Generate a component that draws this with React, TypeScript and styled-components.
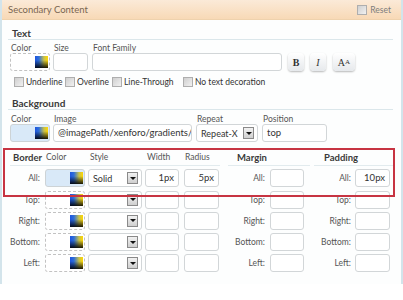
import React from 'react'
import styled, { createGlobalStyle } from 'styled-components'

const GlobalStyle = createGlobalStyle`
    body {
        margin: 0;
        background: #fff;
        font-family: Lato, "Liberation Sans", sans-serif;
        color: #333;
    }
`

const Panel = styled.div`
    width: 403px;
    box-sizing: border-box;
    border-left: 2px solid #d3e4eb;
    border-right: 2px solid #d3e4eb;
    background: #fdfefe;
    padding-bottom: 12px;
`

const Header = styled.div`
    height: 20px;
    box-sizing: border-box;
    display: flex;
    align-items: center;
    justify-content: space-between;
    padding: 0 6px 0 6px;
    background: linear-gradient(#fbead8, #f8d9b6);
    border-bottom: 1px solid #efd2ad;
`

const HeaderTitle = styled.span`
    font-size: 9.5px;
    color: #7a6651;
`

const ResetLabel = styled.label`
    display: flex;
    align-items: center;
    gap: 3px;
    font-size: 8.5px;
    color: #7d7d7d;
    margin-right: 4px;
`

const Body = styled.div`
    padding: 0 8px 0 6px;
`

const SectionHeading = styled.div<{ $top: number }>`
    margin-top: ${p => p.$top}px;
    padding: 0 4px;
    height: 12px;
    line-height: 12px;
    font-size: 10px;
    font-weight: 700;
    color: #3a3a3a;
    border-bottom: 1px solid #dbe7eb;
`

const FieldRow = styled.div<{ $top: number }>`
    display: flex;
    align-items: flex-end;
    margin-top: ${p => p.$top}px;
    padding-left: 2px;
`

const Field = styled.div<{ $w: number; $ml?: number }>`
    display: flex;
    flex-direction: column;
    width: ${p => p.$w}px;
    margin-left: ${p => p.$ml || 0}px;
`

const FieldLabel = styled.div`
    height: 10px;
    line-height: 10px;
    font-size: 8.5px;
    color: #555;
    padding-left: 1px;
`

const TextBox = styled.div<{ $align?: string }>`
    height: 18px;
    box-sizing: border-box;
    border: 1px solid #d2d6d8;
    border-radius: 3px;
    background: #fff;
    font-size: 9.5px;
    line-height: 16px;
    color: #333;
    padding: 0 4px;
    text-align: ${p => p.$align || 'left'};
    white-space: nowrap;
    overflow: hidden;
`

const ColorBox = styled.div<{ $filled?: boolean }>`
    height: 18px;
    box-sizing: border-box;
    border: 1px ${p => (p.$filled ? 'solid #cdd3d6' : 'dashed #c2c2c2')};
    border-radius: 3px;
    background: ${p => (p.$filled ? '#d9e9f8' : '#fff')};
    display: flex;
    align-items: center;
    justify-content: flex-end;
    padding-right: 1px;
`

const Swatch = styled.span`
    width: 13px;
    height: 12px;
    background:
        linear-gradient(to bottom, rgba(0, 0, 0, 0) 35%, rgba(0, 0, 0, 0.9) 100%),
        linear-gradient(to right, #1d55e0 0%, #2f6fd8 30%, #c9c24a 70%, #ffd800 100%);
`

const SelectBox = styled.div`
    height: 18px;
    box-sizing: border-box;
    border: 1px solid #d2d6d8;
    border-radius: 3px;
    background: #fff;
    display: flex;
    align-items: center;
    padding: 0 3px 0 4px;
    font-size: 9px;
    color: #333;
`

const SelectText = styled.span`
    flex: 1;
    min-width: 0;
    overflow: hidden;
    white-space: nowrap;
`

const DropButton = styled.span`
    flex: none;
    width: 11px;
    height: 12px;
    margin-left: 2px;
    box-sizing: border-box;
    border: 1px solid #8a8a8a;
    background: linear-gradient(#f2f2f2, #cfcfcf);
    display: flex;
    align-items: center;
    justify-content: center;
    &::after {
        content: '';
        border-left: 3px solid transparent;
        border-right: 3px solid transparent;
        border-top: 3px solid #111;
    }
`

const StyleButton = styled.div<{ $w: number; $ml: number }>`
    width: ${p => p.$w}px;
    height: 18px;
    margin-left: ${p => p.$ml}px;
    border-radius: 4px;
    background: linear-gradient(#ffffff, #e6e9ec);
    box-shadow: 0 1px 2px rgba(0, 0, 0, 0.28);
    display: flex;
    align-items: center;
    justify-content: center;
    font-family: "Liberation Serif", serif;
    font-size: 10px;
    color: #333;
`

const SmallCap = styled.span`
    font-size: 7px;
`

const CheckRow = styled.div`
    display: flex;
    align-items: center;
    margin-top: 5px;
    padding-left: 6px;
    height: 11px;
`

const CheckItem = styled.label<{ $w?: number }>`
    display: flex;
    align-items: center;
    gap: 2px;
    width: ${p => (p.$w ? `${p.$w}px` : 'auto')};
    font-size: 8.5px;
    color: #333;
    white-space: nowrap;
`

const CheckBox = styled.span`
    width: 10px;
    height: 10px;
    box-sizing: border-box;
    border: 1px solid #aeaeae;
    background: linear-gradient(135deg, #cfcfcf, #f1f1f1);
    flex: none;
`

const BoxArea = styled.div`
    position: relative;
    margin-top: 5px;
    display: flex;
    padding-left: 2px;
`

const Highlight = styled.div`
    position: absolute;
    left: -5px;
    top: 1px;
    width: 392px;
    height: 49px;
    box-sizing: border-box;
    border: 2px solid #c73442;
    pointer-events: none;
`

const Group = styled.div<{ $cols: string; $ml?: number }>`
    display: grid;
    grid-template-columns: ${p => p.$cols};
    grid-template-rows: 19px repeat(5, 18px);
    row-gap: 3.3px;
    margin-left: ${p => p.$ml || 0}px;
`

const GroupHead = styled.div<{ $bold?: boolean; $pl?: number }>`
    font-size: ${p => (p.$bold ? 9.5 : 8.5)}px;
    font-weight: ${p => (p.$bold ? 700 : 400)};
    color: ${p => (p.$bold ? '#3a3a3a' : '#555')};
    padding: 3px 0 0 ${p => p.$pl || 0}px;
    line-height: 15px;
    border-bottom: 1px solid #e2ebee;
`

const RowLabel = styled.div<{ $pr: number }>`
    font-size: 8.5px;
    color: #555;
    text-align: right;
    padding-right: ${p => p.$pr}px;
    line-height: 18px;
`

const Cell = styled.div<{ $w: number }>`
    width: ${p => p.$w}px;
`

const sides = ['All:', 'Top:', 'Right:', 'Bottom:', 'Left:']

const App: React.FC = () => {
    return (
        <>
            <GlobalStyle />
            <Panel>
                <Header>
                    <HeaderTitle>Secondary Content</HeaderTitle>
                    <ResetLabel><CheckBox />Reset</ResetLabel>
                </Header>
                <Body>
                    <SectionHeading $top={7}>Text</SectionHeading>
                    <FieldRow $top={3}>
                        <Field $w={40}>
                            <FieldLabel>Color</FieldLabel>
                            <ColorBox><Swatch /></ColorBox>
                        </Field>
                        <Field $w={35} $ml={3}>
                            <FieldLabel>Size</FieldLabel>
                            <TextBox />
                        </Field>
                        <Field $w={190} $ml={4}>
                            <FieldLabel>Font Family</FieldLabel>
                            <TextBox />
                        </Field>
                        <StyleButton $w={16} $ml={6}><b>B</b></StyleButton>
                        <StyleButton $w={16} $ml={6}><i>I</i></StyleButton>
                        <StyleButton $w={22} $ml={7}>A<SmallCap>A</SmallCap></StyleButton>
                    </FieldRow>
                    <CheckRow>
                        <CheckItem $w={51}><CheckBox />Underline</CheckItem>
                        <CheckItem $w={47}><CheckBox />Overline</CheckItem>
                        <CheckItem $w={71}><CheckBox />Line-Through</CheckItem>
                        <CheckItem><CheckBox />No text decoration</CheckItem>
                    </CheckRow>

                    <SectionHeading $top={10}>Background</SectionHeading>
                    <FieldRow $top={4}>
                        <Field $w={40}>
                            <FieldLabel>Color</FieldLabel>
                            <ColorBox $filled><Swatch /></ColorBox>
                        </Field>
                        <Field $w={139} $ml={3}>
                            <FieldLabel>Image</FieldLabel>
                            <TextBox>@imagePath/xenforo/gradients/c</TextBox>
                        </Field>
                        <Field $w={62} $ml={4}>
                            <FieldLabel>Repeat</FieldLabel>
                            <SelectBox><SelectText>Repeat-X</SelectText><DropButton /></SelectBox>
                        </Field>
                        <Field $w={65} $ml={4}>
                            <FieldLabel>Position</FieldLabel>
                            <TextBox>top</TextBox>
                        </Field>
                    </FieldRow>

                    <BoxArea>
                        <Highlight />
                        <Group $cols="35px 43px 57px 39px 36px">
                            <GroupHead $bold $pl={3}>Border</GroupHead>
                            <GroupHead $pl={1}>Color</GroupHead>
                            <GroupHead $pl={2}>Style</GroupHead>
                            <GroupHead $pl={2}>Width</GroupHead>
                            <GroupHead $pl={1}>Radius</GroupHead>
                            {sides.map((s, i) => (
                                <React.Fragment key={s}>
                                    <RowLabel $pr={5}>{s}</RowLabel>
                                    <Cell $w={40}><ColorBox $filled={i === 0}><Swatch /></ColorBox></Cell>
                                    <Cell $w={54}>
                                        <SelectBox><SelectText>{i === 0 ? 'Solid' : ''}</SelectText><DropButton /></SelectBox>
                                    </Cell>
                                    <Cell $w={34}><TextBox $align="right">{i === 0 ? '1px' : ''}</TextBox></Cell>
                                    <Cell $w={35}><TextBox $align="right">{i === 0 ? '5px' : ''}</TextBox></Cell>
                                </React.Fragment>
                            ))}
                        </Group>
                        <Group $cols="42px 40px" $ml={8}>
                            <GroupHead $bold $pl={9}>Margin</GroupHead>
                            <GroupHead />
                            {sides.map(s => (
                                <React.Fragment key={s}>
                                    <RowLabel $pr={5}>{s}</RowLabel>
                                    <Cell $w={34}><TextBox $align="right" /></Cell>
                                </React.Fragment>
                            ))}
                        </Group>
                        <Group $cols="41px 39px" $ml={4}>
                            <GroupHead $bold $pl={10}>Padding</GroupHead>
                            <GroupHead />
                            {sides.map((s, i) => (
                                <React.Fragment key={s}>
                                    <RowLabel $pr={4}>{s}</RowLabel>
                                    <Cell $w={35}><TextBox $align="right">{i === 0 ? '10px' : ''}</TextBox></Cell>
                                </React.Fragment>
                            ))}
                        </Group>
                    </BoxArea>
                </Body>
            </Panel>
        </>
    )
}

export default App
